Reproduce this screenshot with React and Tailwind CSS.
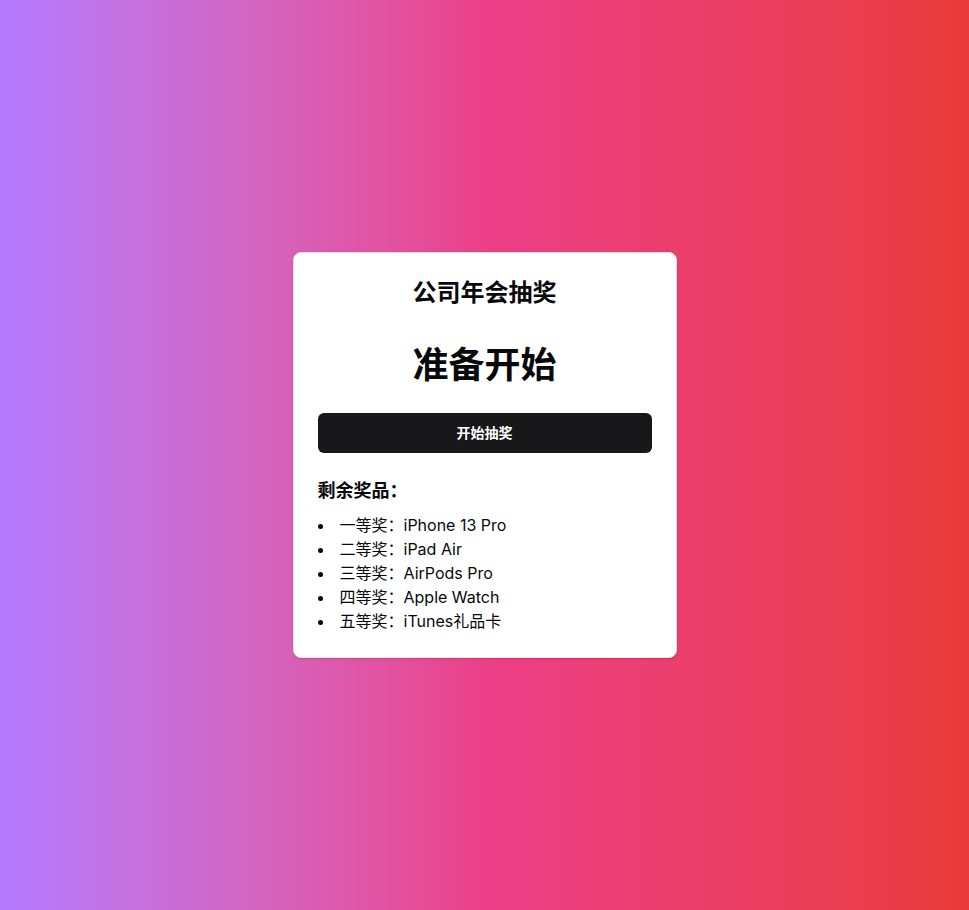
export default function App() {
  const prizes = [
    '一等奖：iPhone 13 Pro',
    '二等奖：iPad Air',
    '三等奖：AirPods Pro',
    '四等奖：Apple Watch',
    '五等奖：iTunes礼品卡',
  ];

  return (
    <div
      className="min-h-screen flex items-center justify-center bg-gradient-to-r from-[#b37bff] via-[#ec3f88] to-[#ea3a38] text-zinc-950"
      style={{ fontFamily: 'Inter, "Noto Sans CJK SC", sans-serif' }}
    >
      <div className="w-full max-w-sm bg-white rounded-lg border border-zinc-200 shadow-sm p-6">
        <h1 className="text-2xl font-bold text-center">公司年会抽奖</h1>
        <div className="mt-9 text-4xl font-bold text-center">准备开始</div>
        <button className="mt-7 w-full h-10 rounded-md bg-zinc-900 text-white text-sm font-semibold">
          开始抽奖
        </button>
        <div className="mt-6">
          <h2 className="text-lg font-semibold mb-2">剩余奖品：</h2>
          <ul className="list-disc list-inside">
            {prizes.map((p) => (
              <li key={p} className="text-base">
                {p}
              </li>
            ))}
          </ul>
        </div>
      </div>
    </div>
  );
}
